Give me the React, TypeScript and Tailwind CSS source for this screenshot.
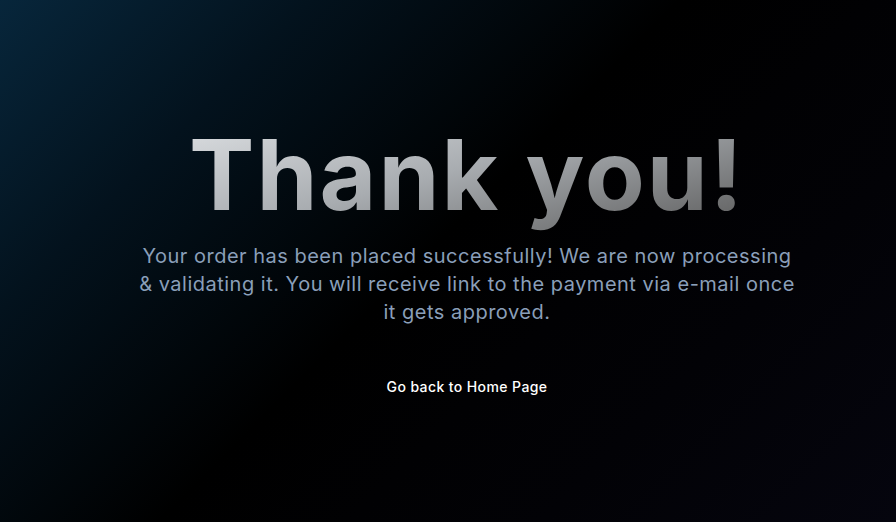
import React from "react";

export default function App() {
  return (
    <div
      className="min-h-screen w-full flex flex-col items-center justify-center pl-[38px] bg-[linear-gradient(135deg,#07263b_0%,#03121d_22%,#000000_48%,#020206_75%,#05050e_100%)]"
      style={{ fontFamily: "Inter, 'Noto Sans', sans-serif" }}
    >
      <h1 className="text-[98px] leading-[1] font-bold tracking-[2px] bg-[linear-gradient(165deg,#dadde0_0%,#a8acb0_45%,#5a5a5a_100%)] bg-clip-text text-transparent pb-[10px]">
        Thank you!
      </h1>
      <p className="mt-[8px] w-[666px] text-center text-[20px] leading-[28px] tracking-[0.5px] text-[#8a9fb9]">
        Your order has been placed successfully! We are now processing &amp; validating it. You will receive link to the payment via e-mail once it gets approved.
      </p>
      <a href="#" className="mt-[50px] text-[14px] tracking-[0.4px] font-medium text-white">
        Go back to Home Page
      </a>
    </div>
  );
}
